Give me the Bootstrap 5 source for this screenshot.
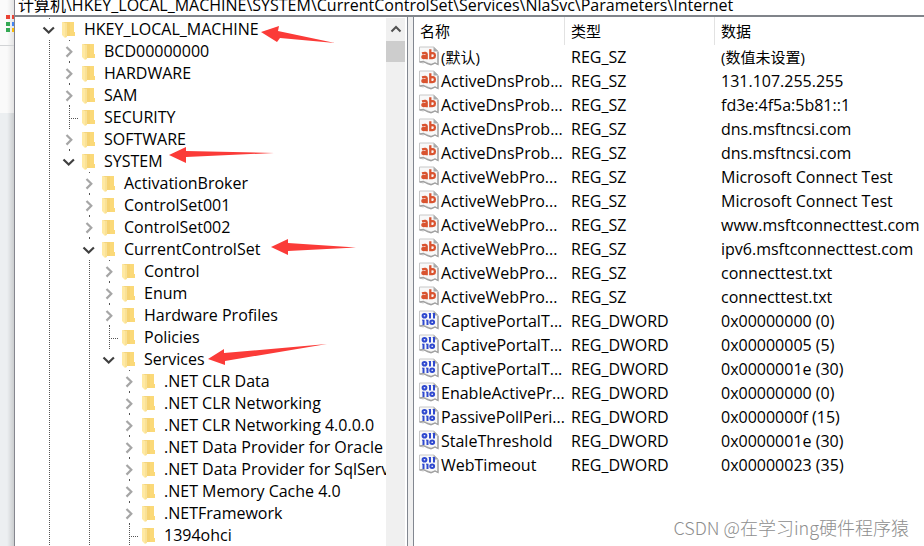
<!DOCTYPE html>
<html lang="zh-CN">
<head>
<meta charset="utf-8">
<meta name="viewport" content="width=device-width, initial-scale=1">
<title>注册表编辑器</title>
<link href="https://cdn.jsdelivr.net/npm/bootstrap@5.3.0/dist/css/bootstrap.min.css" rel="stylesheet">
<style>
body { font-family: "Open Sans", "Noto Sans CJK SC", sans-serif; font-size: 16px; color: #000; background: #fff; }
.backdrop { width: 14px; background: linear-gradient(90deg, #0000 0, #0000 50%, #00000024 100%), #eceff1; }
.backdrop-top { height: 46px; padding: 15px 0 0 6px; background: linear-gradient(90deg, #0000 0, #0000 50%, #00000018 100%), #fbfbfb; border-bottom: 1px solid #d2d4d6; }
.backdrop-mid { height: 67px; background: linear-gradient(90deg, #0000 0, #0000 50%, #00000018 100%), #fafafa; }
.editor { border-left: 1px solid #85868e; }
.address { height: 17px; border-bottom: 2px solid #80848a; }
.address input { height: 23px; padding: 0 3px; line-height: 22px; color: #000; outline: 0; }
.tree-pane { flex: 0 0 393px; min-width: 0; border-right: 1px solid #828790; }
.splitter { width: 5px; background: #f0f0f0; }
.list-pane { border-left: 1px solid #828790; }
.tree { min-width: 0; padding: 1px 0 0 24px; }
.node { height: 22px; line-height: 22px; white-space: nowrap; }
.guide { flex: 0 0 20px; height: 22px; display: flex; align-items: center; justify-content: center; }
.guide svg, .folder svg { display: block; }
.twist { width: 20px; height: 22px; }
.folder { flex: 0 0 20px; }
.node-name { padding-left: 5px; }
.bar { width: 19px; margin: 1px 2px 0 0; background: #f0f0f0; }
.bar button { height: 22px; }
.thumb { height: 21px; margin-top: 1px; background: #cdcdcd; }
.marks { inset: 0; pointer-events: none; }
.values { table-layout: fixed; border-collapse: separate; border-spacing: 0; }
.values th { height: 28px; padding: 0 0 0 6px; font-weight: 400; font-size: 15px; border-right: 1px solid #e2e2e2; }
.values th:last-child { border-right: 0; }
.values td { height: 24px; line-height: 24px; padding: 0 0 0 6px; white-space: nowrap; }
.values td:first-child { padding-left: 5px; }
.value-icon { padding-top: 1px; line-height: 0; }
.value-name { padding-left: 2px; }
.han { font-size: 15px; }
.col-key { width: 151px; }
.col-type { width: 150px; }
.credit { right: 15px; bottom: 6px; font: 300 18px/26px "Noto Sans CJK SC", sans-serif; color: #8e8e8e; }
</style>
<script src="https://cdn.jsdelivr.net/npm/bootstrap@5.3.0/dist/js/bootstrap.bundle.min.js"></script>
</head>
<body class="vh-100 overflow-hidden d-flex">
<svg class="d-none">
  <symbol id="i-folder" viewBox="0 0 20 22"><path d="M8 4h7v10l1 .5V18H8z" fill="#f6d374"/><path d="M11 4h4v10h1v4h-5z" fill="#fbd978"/><path d="M3 4l5 1v14l-2 1-3-3z" fill="#ffe9a2"/><path d="M7 5v14" stroke="#f3d98c"/><path d="M3 4h5v1H6z" fill="#f5d67c"/></symbol>
  <symbol id="i-shut" viewBox="0 0 20 22"><path d="M10.500 0v1M10.500 21v1" stroke="#555"/><path d="M7.500 7l4.800 4.800-4.800 4.800" fill="none" stroke="#a6a6a6" stroke-width="2.200"/></symbol>
  <symbol id="i-open" viewBox="0 0 20 22"><path d="M10.500 0v1" stroke="#555"/><path d="M4.500 9.500l5.200 5 5.200-5" fill="none" stroke="#404040" stroke-width="2.200"/></symbol>
  <symbol id="i-line" viewBox="0 0 20 22"><path d="M10.500 0v22" stroke="#555" stroke-dasharray="1 1"/></symbol>
  <symbol id="i-leaf" viewBox="0 0 20 22"><path d="M10.500 0v22M10 12.500h9" fill="none" stroke="#555" stroke-dasharray="1 1"/></symbol>
  <symbol id="i-page" viewBox="0 0 20 20"><path d="M.5 1h14.500l4 4v13.500l-3-1.500-3 1.500-3-1-3-1.500-3 1-3.500-1z" fill="#f8f8f8" stroke="#c8c8c8"/><path d="M14.500 1v4.500h5z" fill="#a9a9a9"/><path d="M.5 16l4-.5 4 2.200 3.500 1 4-1.700 3 1.500V6" fill="none" stroke="#a0a0a0" stroke-width="1.300"/></symbol>
  <symbol id="i-sz" viewBox="0 0 20 20"><use href="#i-page"/><g fill="none" stroke="#d9532f" stroke-width="2.300"><path d="M3 7.300q4.500-1.300 4.700.9V13.200M8 9.700q-4.700-.2-4.700 1.400 0 2 4.500.2"/><path d="M11.300 3.200V13.200M11.300 7.700q4.600-1.500 4.600 1.700 0 3.400-4.600 2.400"/></g></symbol>
  <symbol id="i-dw" viewBox="0 0 20 20"><use href="#i-page"/><g fill="none" stroke="#2f49cf" stroke-width="2"><ellipse cx="5.500" cy="5.700" rx="1.900" ry="1.800"/><path d="M11 3V8.500M15 3V8.500M4.500 9.700v5.200M8.500 9.700v5.200"/><path d="M9.700 3.500h1M13.700 3.500h1M3.200 10.200h1M7.200 10.200h1" stroke-width="1"/><ellipse cx="13.200" cy="12.300" rx="1.900" ry="1.700"/></g></symbol>
</svg>

<aside class="backdrop flex-shrink-0 overflow-hidden">
  <div class="backdrop-top"><svg width="10" height="20" class="d-block"><path d="M0 0h4v4H0z" fill="#ea4335"/><path d="M0 7h4v4H0zM0 13h4v4H0z" fill="#34a853"/><path d="M6 0h4v4H6z" fill="#ea4335"/><path d="M6 7h4v4H6z" fill="#4285f4"/><path d="M6 13h4v4H6z" fill="#fbbc05"/></svg></div>
  <div class="backdrop-mid"></div>
</aside>

<main class="editor flex-grow-1 d-flex flex-column position-relative bg-white overflow-hidden">
  <div class="address d-flex align-items-end overflow-hidden flex-shrink-0">
    <input class="border-0 w-100" type="text" aria-label="地址" value="计算机\HKEY_LOCAL_MACHINE\SYSTEM\CurrentControlSet\Services\NlaSvc\Parameters\Internet">
  </div>
  <div class="d-flex flex-grow-1 overflow-hidden">
    <nav class="tree-pane d-flex position-relative" aria-label="注册表项">
      <div class="tree flex-grow-1 overflow-hidden" id="tree"></div>
      <div class="bar flex-shrink-0">
        <button class="btn p-0 border-0 rounded-0 w-100 d-flex align-items-center justify-content-center" aria-label="向上滚动"><svg width="12" height="8"><path d="M1.500 6.500l4.500-4.500 4.500 4.500" fill="none" stroke="#505050" stroke-width="2"/></svg></button>
        <div class="thumb"></div>
      </div>
      <svg class="marks position-absolute" width="392" height="529" viewBox="15 17 392 529" fill="#fb3b38">
        <path d="M261 32l18-6-1 5 57 12-55-5-3 4z"/>
        <path d="M169 155l17-8v4l88 2-88 4v6z"/>
        <path d="M271 247l17-8v4l68 4.500-68 3.500v4z"/>
        <path d="M208 359l16-10v4l103-9-102 17v4z"/>
      </svg>
    </nav>
    <div class="splitter flex-shrink-0"></div>
    <section class="list-pane flex-grow-1 overflow-hidden">
      <table class="values w-100">
        <colgroup><col class="col-key"><col class="col-type"><col></colgroup>
        <thead><tr><th>名称</th><th>类型</th><th>数据</th></tr></thead>
        <tbody id="values"></tbody>
      </table>
    </section>
  </div>
  <div class="credit position-absolute">CSDN @在学习ing硬件程序猿</div>
</main>

<script>
// Each node: guide cells (o open, s shut, l leaf, | line, _ blank), then its name.
const nodes = [
  ["o", "HKEY_LOCAL_MACHINE"], ["|s", "BCD00000000"], ["|s", "HARDWARE"], ["|s", "SAM"], ["|l", "SECURITY"],
  ["|s", "SOFTWARE"], ["|o", "SYSTEM"], ["|_s", "ActivationBroker"], ["|_s", "ControlSet001"], ["|_s", "ControlSet002"],
  ["|_o", "CurrentControlSet"], ["|_|s", "Control"], ["|_|s", "Enum"], ["|_|s", "Hardware Profiles"], ["|_|l", "Policies"],
  ["|_|o", "Services"], ["|_|_s", ".NET CLR Data"], ["|_|_s", ".NET CLR Networking"], ["|_|_s", ".NET CLR Networking 4.0.0.0"],
  ["|_|_s", ".NET Data Provider for Oracle"], ["|_|_s", ".NET Data Provider for SqlServ"], ["|_|_s", ".NET Memory Cache 4.0"],
  ["|_|_s", ".NETFramework"], ["|_|_l", "1394ohci"]
];
const icon = (id, w, h) => `<svg width="${w}" height="${h}" aria-hidden="true"><use href="#i-${id}"/></svg>`;
const cell = (c, name) => {
  if (c === "_") return '<span class="guide"></span>';
  if (c === "|" || c === "l") return `<span class="guide">${icon(c === "|" ? "line" : "leaf", 20, 22)}</span>`;
  return `<span class="guide"><button class="twist btn p-0 border-0 rounded-0" aria-label="${name}">${icon(c === "o" ? "open" : "shut", 20, 22)}</button></span>`;
};
document.getElementById("tree").innerHTML = nodes.map(([g, n]) =>
  `<div class="node d-flex">${[...g].map(c => cell(c, n)).join("")}<span class="folder">${icon("folder", 20, 22)}</span><span class="node-name">${n}</span></div>`).join("");

const values = [
  ["sz", "(默认)", "(数值未设置)"], ["sz", "ActiveDnsProb...", "131.107.255.255"], ["sz", "ActiveDnsProb...", "fd3e:4f5a:5b81::1"],
  ["sz", "ActiveDnsProb...", "dns.msftncsi.com"], ["sz", "ActiveDnsProb...", "dns.msftncsi.com"],
  ["sz", "ActiveWebPro...", "Microsoft Connect Test"], ["sz", "ActiveWebPro...", "Microsoft Connect Test"],
  ["sz", "ActiveWebPro...", "www.msftconnecttest.com"], ["sz", "ActiveWebPro...", "ipv6.msftconnecttest.com"],
  ["sz", "ActiveWebPro...", "connecttest.txt"], ["sz", "ActiveWebPro...", "connecttest.txt"],
  ["dw", "CaptivePortalT...", "0x00000000 (0)"], ["dw", "CaptivePortalT...", "0x00000005 (5)"], ["dw", "CaptivePortalT...", "0x0000001e (30)"],
  ["dw", "EnableActivePr...", "0x00000000 (0)"], ["dw", "PassivePollPeri...", "0x0000000f (15)"],
  ["dw", "StaleThreshold", "0x0000001e (30)"], ["dw", "WebTimeout", "0x00000023 (35)"]
];
const han = s => /[\u4e00-\u9fff]/.test(s) ? " han" : "";
document.getElementById("values").innerHTML = values.map(([t, n, d]) =>
  `<tr><td><span class="d-flex align-items-start"><span class="value-icon">${icon(t, 20, 20)}</span><span class="value-name${han(n)}">${n}</span></span></td><td>${t === "sz" ? "REG_SZ" : "REG_DWORD"}</td><td class="value-data${han(d)}">${d}</td></tr>`).join("");
</script>
</body>
</html>
